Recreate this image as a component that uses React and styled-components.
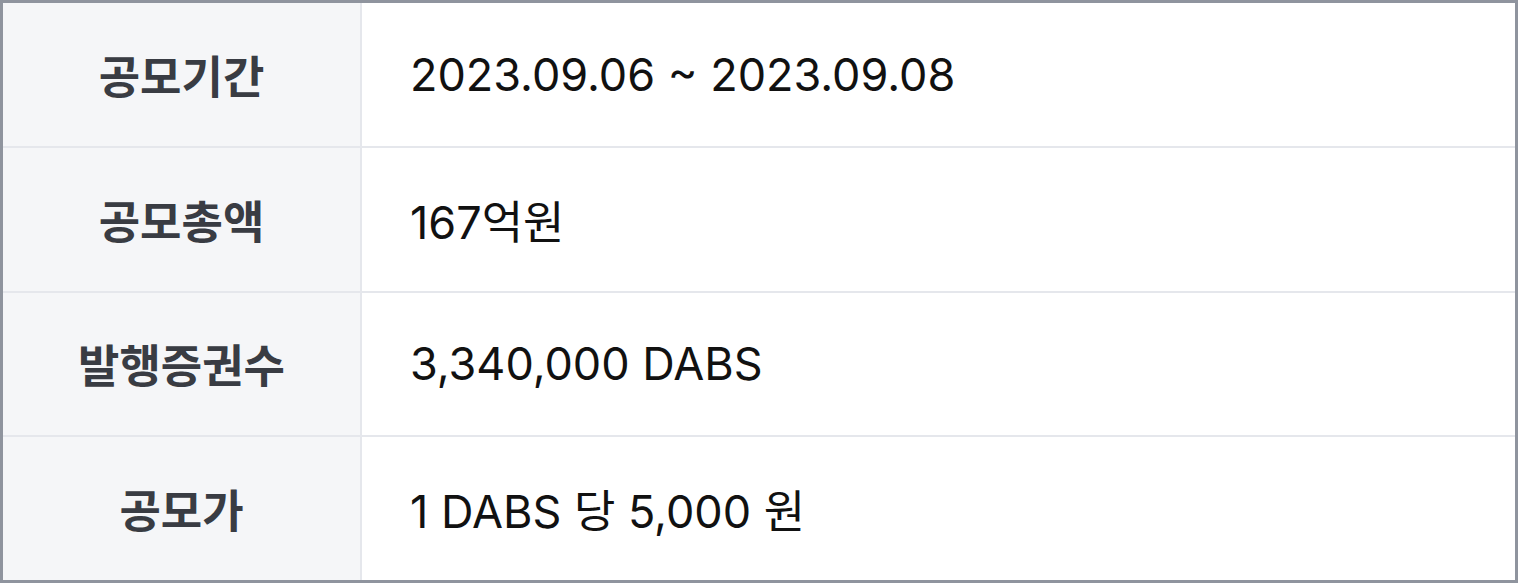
import React from 'react';
import styled, { createGlobalStyle } from 'styled-components';

const GlobalStyle = createGlobalStyle`
  html, body {
    margin: 0;
    padding: 0;
    background: #ffffff;
  }
  body {
    font-family: 'Inter', 'Noto Sans CJK KR', sans-serif;
  }
`;

const Table = styled.div`
  box-sizing: border-box;
  width: 1518px;
  height: 583px;
  border: 3px solid #8f949e;
  display: grid;
  grid-template-columns: 357px 2px 1fr;
  grid-auto-rows: 1fr;
  background: #e5e7ec;
  row-gap: 2px;
`;

const Label = styled.div`
  grid-column: 1;
  background: #f5f6f8;
  display: flex;
  align-items: center;
  justify-content: center;
  font-family: 'Noto Sans CJK KR', sans-serif;
  font-weight: 700;
  font-size: 45px;
  color: #393c43;
`;

const Value = styled.div`
  grid-column: 3;
  background: #ffffff;
  display: flex;
  align-items: center;
  padding-left: 48px;
  font-family: 'Inter', 'Noto Sans CJK KR', sans-serif;
  font-size: 45px;
  color: #111111;
`;

const rows = [
  { label: '공모기간', value: '2023.09.06 ~ 2023.09.08' },
  { label: '공모총액', value: '167억원' },
  { label: '발행증권수', value: '3,340,000 DABS' },
  { label: '공모가', value: '1 DABS 당 5,000 원' },
];

export default function App() {
  return (
    <>
      <GlobalStyle />
      <Table>
        {rows.map(row => (
          <React.Fragment key={row.label}>
            <Label>{row.label}</Label>
            <Value>{row.value}</Value>
          </React.Fragment>
        ))}
      </Table>
    </>
  );
}
